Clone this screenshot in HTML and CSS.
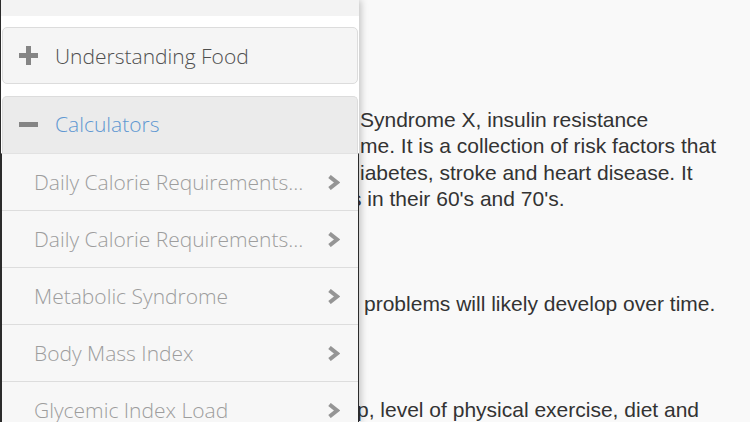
FILE: index.html
```html
<!DOCTYPE html>
<html lang="en">
<head>
    <meta charset="UTF-8">
    <meta name="viewport" content="width=device-width, initial-scale=1.0">
    <title>Metabolic Syndrome</title>
    <link rel="stylesheet" href="styles.css">
</head>
<body>
    <div class="article">
        <p>Syndrome X, insulin resistance<br>me. It is a collection of risk factors that<br>iabetes, stroke and heart disease. It<br><span class="tuck">s</span> in their 60's and 70's.</p>
        <p><span class="push">problems will likely develop over time.</span></p>
        <p><span class="nudge">p, level of physical exercise, diet and</span></p>
    </div>

    <!-- side menu, drawn over the article -->
    <div class="drawer">
        <div class="strip"></div>

        <div class="panel">
            <div class="panel-head">
                <svg class="toggle" width="19" height="19" viewBox="0 0 19 19"><rect x="7" y="0" width="5" height="19"/><rect x="0" y="7" width="19" height="5"/></svg>
                <span>Understanding Food</span>
            </div>
        </div>

        <div class="panel open">
            <div class="panel-head">
                <svg class="toggle" width="19" height="5" viewBox="0 0 19 5"><rect x="0" y="0" width="19" height="5"/></svg>
                <span>Calculators</span>
            </div>
            <ul class="items">
                <li><span class="label">Daily Calorie Requirements…</span><svg class="chev" width="13" height="15" viewBox="0 0 13 15"><path d="M2.5 1.5 L10 7.5 L2.5 13.5"/></svg></li>
                <li><span class="label">Daily Calorie Requirements…</span><svg class="chev" width="13" height="15" viewBox="0 0 13 15"><path d="M2.5 1.5 L10 7.5 L2.5 13.5"/></svg></li>
                <li><span class="label">Metabolic Syndrome</span><svg class="chev" width="13" height="15" viewBox="0 0 13 15"><path d="M2.5 1.5 L10 7.5 L2.5 13.5"/></svg></li>
                <li><span class="label">Body Mass Index</span><svg class="chev" width="13" height="15" viewBox="0 0 13 15"><path d="M2.5 1.5 L10 7.5 L2.5 13.5"/></svg></li>
                <li><span class="label">Glycemic Index Load</span><svg class="chev" width="13" height="15" viewBox="0 0 13 15"><path d="M2.5 1.5 L10 7.5 L2.5 13.5"/></svg></li>
            </ul>
        </div>
    </div>
</body>
</html>
```

FILE: styles.css
```css
body {
    margin: 0;
    height: 422px;
    overflow: hidden;
    background: #f9f9f9;
    position: relative;
}
.article {
    padding: 107px 0 0 360px;
    font-family: "Liberation Sans", Arial, sans-serif;
    font-size: 21px;
    line-height: 26.33px;
    color: #333;
}
.article p {
    margin: 0 0 79px 0;
}
.tuck {
    margin-left: -9px;
}
.push {
    margin-left: 4px;
}
.nudge {
    margin-left: -3px;
}

.drawer {
    position: absolute;
    left: 0;
    top: 0;
    bottom: 0;
    width: 358px;
    background: #fff;
    border-left: 1px solid #2b2b2b;
    box-shadow: 2px 0 7px rgba(0, 0, 0, 0.22);
    font-family: "Open Sans", sans-serif;
    font-weight: 300;
    overflow: hidden;
}
.strip {
    height: 16px;
    background: #f3f3f3;
}
.panel {
    margin: 11px 1px 0 1px;
    border: 1px solid #dcdcdc;
    border-radius: 5px;
    background: #f5f5f5;
}
.panel.open {
    margin-top: 12px;
    border-bottom: none;
    border-radius: 5px 5px 0 0;
    background: #ebebeb;
}
.panel-head {
    display: flex;
    align-items: center;
    height: 55px;
    padding-left: 16px;
    font-size: 21px;
    color: #4f4f4f;
}
.panel.open .panel-head {
    height: 54px;
    padding-bottom: 2px;
    color: #5f98d2;
}
.toggle {
    fill: #858585;
    margin-right: 17px;
}
.items {
    list-style: none;
    margin: 0 -2px 0 -2px;
    padding: 0;
    border-left: 1px solid #2b2b2b;
    border-right: 1px solid #2b2b2b;
    border-top: 1px solid #e2e2e2;
}
.items li {
    display: flex;
    align-items: center;
    height: 56px;
    padding: 0 18px 0 32px;
    background: #f7f7f7;
    border-bottom: 1px solid #dddddd;
    font-size: 21px;
    color: #9d9d9d;
}
.label {
    flex: 1;
    min-width: 0;
    white-space: nowrap;
    margin-right: 20px;
}
.chev {
    flex: none;
    fill: none;
    stroke: #959595;
    stroke-width: 4;
}
```
